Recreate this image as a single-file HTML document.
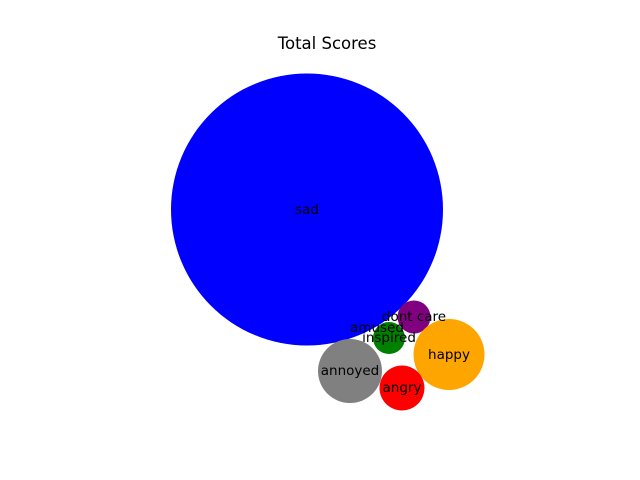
<!DOCTYPE html>
<html><head><meta charset="utf-8"><style>
html,body{margin:0;padding:0;background:#fff;width:640px;height:480px;overflow:hidden}
</style></head><body>
<svg width="640" height="480" viewBox="0 0 640 480" xmlns="http://www.w3.org/2000/svg" font-family="DejaVu Sans, sans-serif">
<text x="327" y="49" font-size="16.5" text-anchor="middle" fill="#000">Total Scores</text>
<circle cx="307" cy="209.5" r="136" fill="#0000ff"/>
<circle cx="414" cy="317" r="16.5" fill="#800080"/>
<circle cx="389" cy="338" r="16" fill="#008000"/>
<circle cx="449" cy="354.5" r="35.5" fill="#ffa500"/>
<circle cx="350" cy="371" r="32" fill="#808080"/>
<circle cx="402" cy="388" r="22.5" fill="#ff0000"/>
<g font-size="13.5" text-anchor="middle" fill="#000">
<text x="307" y="214">sad</text>
<text x="414" y="321">dont care</text>
<text x="377" y="332">amused</text>
<text x="389" y="342">inspired</text>
<text x="449" y="359">happy</text>
<text x="350" y="375">annoyed</text>
<text x="402" y="392">angry</text>
</g>
</svg>
</body></html>
